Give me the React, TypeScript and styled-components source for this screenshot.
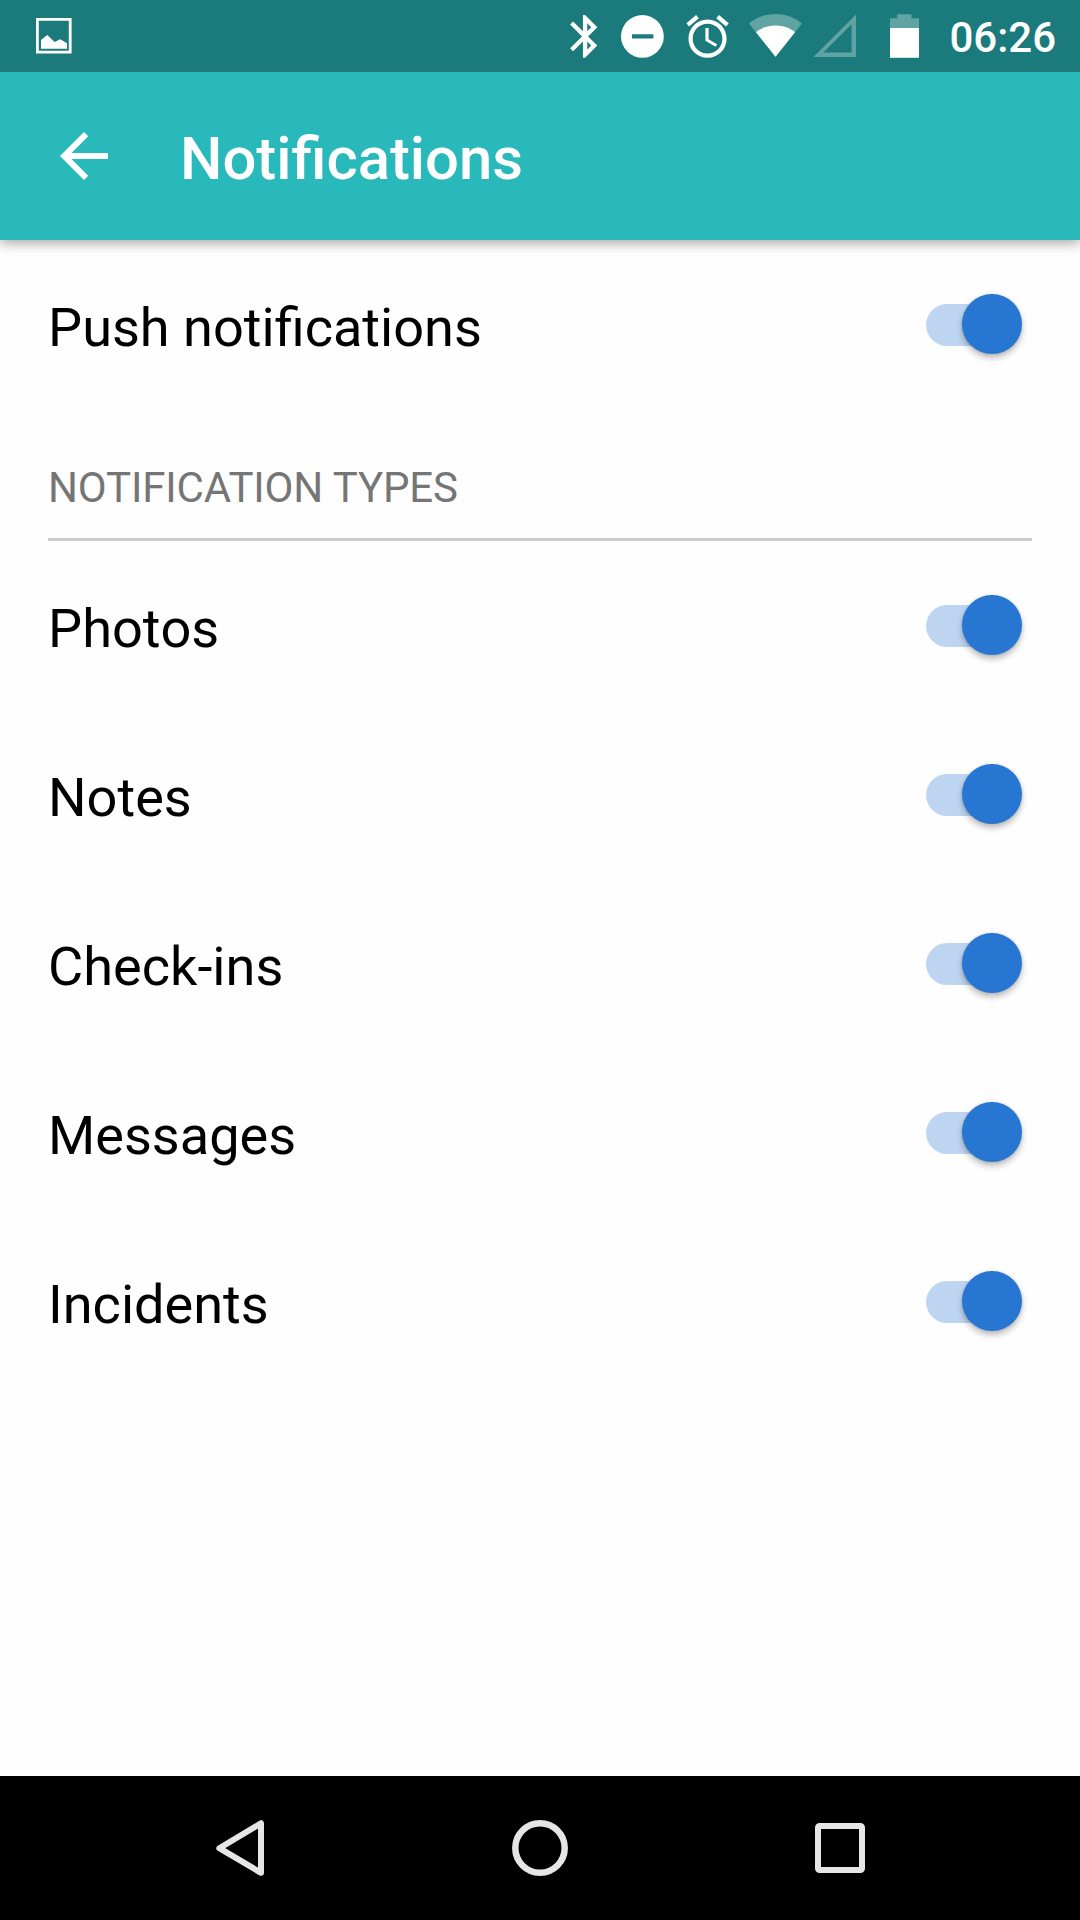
import React, { useState } from "react";
import styled, { createGlobalStyle } from "styled-components";

const GlobalStyle = createGlobalStyle`
  *, *::before, *::after { box-sizing: border-box; }
  body { margin: 0; background: #fff; }
`;

const Screen = styled.div`
  display: flex;
  flex-direction: column;
  width: 1080px;
  height: 1920px;
  overflow: hidden;
  background: #fefefe;
  color: #000;
  font-family: Roboto, "Noto Sans", sans-serif;
`;

const StatusBar = styled.div`
  display: flex;
  align-items: center;
  flex: none;
  height: 72px;
  padding: 0 24px 0 36px;
  background: #1b7b7c;
  color: #fff;
`;

const Spacer = styled.div`
  flex: 1;
`;

const Glyph = styled.svg<{ $gap?: number }>`
  display: block;
  flex: none;
  margin-right: ${(p) => p.$gap ?? 0}px;
  fill: currentColor;
`;

const Clock = styled.span`
  font-size: 42px;
  font-weight: 500;
  line-height: 50px;
  white-space: nowrap;
  padding-top: 4px;
`;

const AppBar = styled.header`
  display: flex;
  align-items: center;
  flex: none;
  height: 168px;
  padding-left: 60px;
  background: #2ab9bb;
  color: #fff;
  box-shadow: 0 3px 12px rgba(0, 0, 0, 0.36);
  clip-path: inset(0 0 -30px 0);
`;

const BackButton = styled.button`
  display: flex;
  padding: 0;
  margin-right: 72px;
  border: 0;
  background: none;
  color: inherit;
`;

const Title = styled.h1`
  margin: 0;
  font-size: 59.8px;
  font-weight: 500;
  line-height: 70px;
  padding-top: 6px;
`;

const Content = styled.main`
  display: flex;
  flex-direction: column;
  flex: 1;
  padding: 0 48px;
`;

const Row = styled.label`
  display: flex;
  align-items: center;
  justify-content: space-between;
  height: 169px;
  padding: 1px 11px 0 0;
`;

const RowLabel = styled.span`
  font-size: 54.1px;
  line-height: 64px;
  padding-top: 6px;
  font-kerning: none;
`;

const SectionHeader = styled.h2`
  display: flex;
  align-items: flex-end;
  height: 132px;
  margin: 0;
  padding-bottom: 25px;
  border-bottom: 3px solid #cccccc;
  color: #757575;
  font-size: 42px;
  font-weight: 400;
  line-height: 50px;
  letter-spacing: -0.14px;
`;

const Track = styled.button<{ $on: boolean }>`
  display: flex;
  align-items: center;
  justify-content: ${(p) => (p.$on ? "flex-end" : "flex-start")};
  width: 95px;
  height: 42px;
  padding: 0;
  border: 0;
  border-radius: 21px;
  background: ${(p) =>
    p.$on
      ? "linear-gradient(90deg, #bed5f1 0 70px, transparent 70px)"
      : "#b9b9b9"};
`;

const Thumb = styled.span<{ $on: boolean }>`
  flex: none;
  width: 60px;
  height: 60px;
  margin-right: -0.5px;
  margin-bottom: 2px;
  border-radius: 50%;
  background: ${(p) => (p.$on ? "#2776d2" : "#f1f1f1")};
  box-shadow: 0 4px 6px rgba(0, 0, 0, 0.26), 0 0 3px rgba(0, 0, 0, 0.12);
`;

const NavBar = styled.nav`
  display: flex;
  align-items: center;
  justify-content: center;
  gap: 216px;
  flex: none;
  height: 144px;
  background: #000;
  color: #e6e6e6;
`;

const NavButton = styled.button`
  display: flex;
  padding: 0;
  border: 0;
  background: none;
  color: inherit;
`;

const BLUETOOTH =
  "M17.71 7.71L12 2h-1v7.59L6.41 5 5 6.41 10.59 12 5 17.59 6.41 19 11 14.41V22h1l5.71-5.71-4.3-4.29 4.3-4.29zM13 5.83l1.88 1.88L13 9.59V5.83zm1.88 10.46L13 18.17v-3.76l1.88 1.88z";
const ALARM =
  "M22 5.72l-4.6-3.86-1.29 1.53 4.6 3.86L22 5.72zM7.88 3.39L6.6 1.86 2 5.71l1.29 1.53 4.59-3.85zM12.5 8H11v6l4.75 2.85.75-1.23-4-2.37V8zM12 4c-4.97 0-9 4.03-9 9s4.02 9 9 9c4.97 0 9-4.03 9-9s-4.03-9-9-9zm0 16c-3.87 0-7-3.13-7-7s3.13-7 7-7 7 3.13 7 7-3.13 7-7 7z";

function StatusIcons() {
  return (
    <>
      <Glyph width="36" height="72" viewBox="0 0 36 72">
        <path
          fillRule="evenodd"
          d="M0 18h35.6v35.6H0zM2.8 20.8v30h30v-30z"
        />
        <path d="M5 48.7V40l6.3-5 7.3 7 5.7-2.7 6.7 4v5.4z" />
      </Glyph>
      <Spacer />
      <Glyph width="28" height="72" viewBox="0 0 28 72" $gap={23}>
        <path d={BLUETOOTH} transform="translate(-10.6 10.7) scale(2.14)" />
      </Glyph>
      <Glyph width="44" height="72" viewBox="0 0 44 72" $gap={21}>
        <path
          fillRule="evenodd"
          d="M21.4 15a21.4 21.4 0 1 0 0 42.8a21.4 21.4 0 1 0 0-42.8zM11 34.2h21.4v4.4H11z"
        />
      </Glyph>
      <Glyph width="44" height="72" viewBox="0 0 44 72" $gap={19}>
        <path d={ALARM} transform="translate(-3.9 11.1) scale(2.12)" />
      </Glyph>
      <Glyph width="53" height="72" viewBox="0 0 53 72" $gap={11}>
        <path
          opacity="0.3"
          d="M26.5 56.8L53 23.6C51 22 41.6 14 26.5 14S2 22 0 23.6z"
        />
        <path d="M26.5 56.8L46 32.2C44.5 31 37.5 25.6 26.5 25.6S8.5 31 7 32.2z" />
      </Glyph>
      <Glyph width="44" height="72" viewBox="0 0 44 72" $gap={33}>
        <path
          opacity="0.3"
          fillRule="evenodd"
          d="M.4 57L43 14.4V57zM10.3 52.6h28.3V24.3z"
        />
      </Glyph>
      <Glyph width="29" height="72" viewBox="0 0 29 72" $gap={30}>
        <path opacity="0.3" d="M7.2 14.2h14.3v4H29V28H0v-9.8h7.2z" />
        <path d="M0 28h29v29.8H0z" />
      </Glyph>
    </>
  );
}

function SettingRow({ label }: { label: string }) {
  const [on, setOn] = useState(true);
  return (
    <Row>
      <RowLabel>{label}</RowLabel>
      <Track
        $on={on}
        role="switch"
        aria-checked={on}
        aria-label={label}
        onClick={() => setOn(!on)}
      >
        <Thumb $on={on} />
      </Track>
    </Row>
  );
}

const TYPES = ["Photos", "Notes", "Check-ins", "Messages", "Incidents"];

export default function App() {
  return (
    <>
      <GlobalStyle />
      <Screen>
        <StatusBar>
          <StatusIcons />
          <Clock>06:26</Clock>
        </StatusBar>
        <AppBar>
          <BackButton aria-label="Back">
            <Glyph width="48" height="48" viewBox="0 0 48 48">
              <path d="M48 21H11.5L28.2 4.2 24 0 0 24l24 24 4.2-4.2L11.5 27H48z" />
            </Glyph>
          </BackButton>
          <Title>Notifications</Title>
        </AppBar>
        <Content>
          <SettingRow label="Push notifications" />
          <SectionHeader>NOTIFICATION TYPES</SectionHeader>
          {TYPES.map((t) => (
            <SettingRow key={t} label={t} />
          ))}
        </Content>
        <NavBar>
          <NavButton aria-label="Back">
            <Glyph width="84" height="84" viewBox="0 0 84 84">
              <path
                d="M21.3 42.2L63 17.2V66.8z"
                fill="none"
                stroke="currentColor"
                strokeWidth="6"
                strokeLinejoin="round"
              />
            </Glyph>
          </NavButton>
          <NavButton aria-label="Home">
            <Glyph width="84" height="84" viewBox="0 0 84 84">
              <circle
                cx="42"
                cy="42"
                r="24.7"
                fill="none"
                stroke="currentColor"
                strokeWidth="6.5"
              />
            </Glyph>
          </NavButton>
          <NavButton aria-label="Recent apps">
            <Glyph width="84" height="84" viewBox="0 0 84 84">
              <rect
                x="20"
                y="20"
                width="44"
                height="44"
                rx="1.6"
                fill="none"
                stroke="currentColor"
                strokeWidth="6"
              />
            </Glyph>
          </NavButton>
        </NavBar>
      </Screen>
    </>
  );
}
